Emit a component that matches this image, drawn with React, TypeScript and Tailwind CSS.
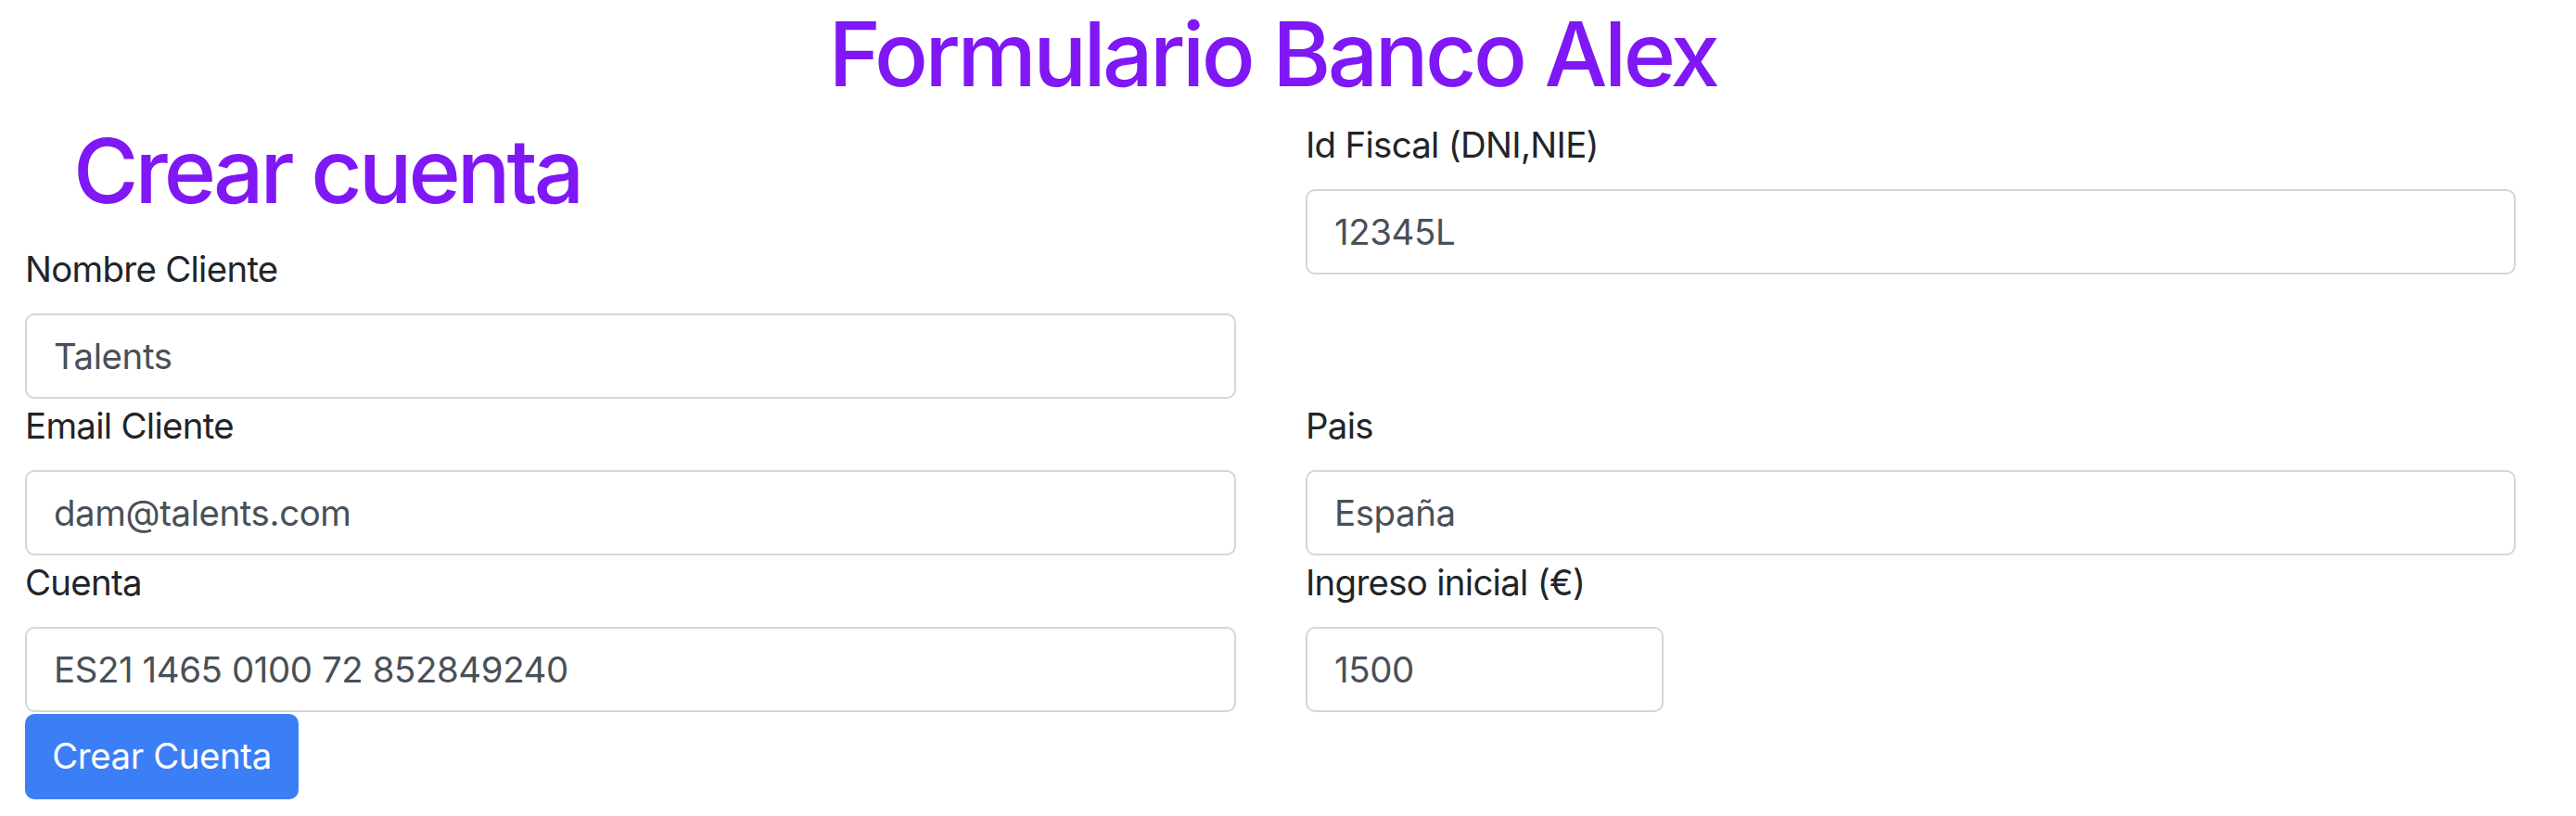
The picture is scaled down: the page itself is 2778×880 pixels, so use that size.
import React from 'react'

const Field = ({ label, value, inputClass = 'w-full' }: { label: string; value: string; inputClass?: string }) => (
  <div className="flex flex-col">
    <label className="block text-[38.4px] leading-[58px] mb-[19px] text-[#212529] tracking-[-0.7px]">{label}</label>
    <input
      type="text"
      defaultValue={value}
      className={`${inputClass} h-[92px] border-2 border-[#d2d7dd] rounded-[10px] px-[29px] text-[38.4px] text-[#495057] tracking-[-0.4px] bg-white outline-none`}
    />
  </div>
)

const App = () => {
  return (
    <div className="w-[2745px] min-h-[880px] bg-white font-['Inter','Liberation_Sans',sans-serif]">
      <h1 className="text-center text-[96px] leading-[116px] font-medium text-[#7f18f4] tracking-[-3.5px] mb-[11px]">
        Formulario Banco Alex
      </h1>
      <div className="pl-[27px] grid grid-cols-[1306px_1305px] gap-x-[75px] items-start">
        <div className="flex flex-col">
          <h1 className="text-[96px] leading-[115px] mb-[19px] pl-[52px] font-medium text-[#7f18f4] tracking-[-4px]">
            Crear cuenta
          </h1>
          <Field label="Nombre Cliente" value="Talents" />
        </div>
        <Field label="Id Fiscal (DNI,NIE)" value="12345L" />

        <Field label="Email Cliente" value="dam@talents.com" />
        <Field label="Pais" value="España" />

        <Field label="Cuenta" value="ES21 1465 0100 72 852849240" />
        <Field label="Ingreso inicial (€)" value="1500" inputClass="w-[386px]" />

        <div className="pt-[2px]">
          <button className="w-[295px] h-[92px] rounded-[10px] bg-[#3b7ef6] text-white text-[38.4px] tracking-[-0.4px]">
            Crear Cuenta
          </button>
        </div>
      </div>
    </div>
  )
}

export default App
